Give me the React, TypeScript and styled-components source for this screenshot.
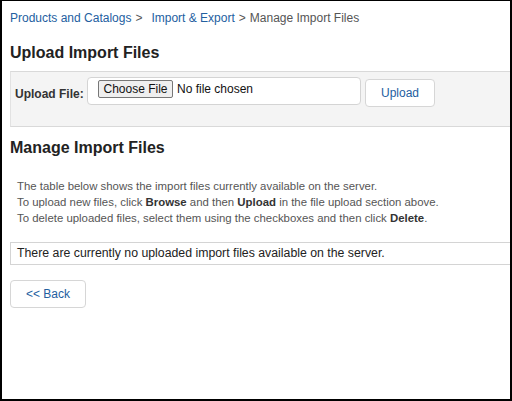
import styled, { createGlobalStyle } from 'styled-components'

const GlobalStyle = createGlobalStyle`
  html, body {
    margin: 0;
    padding: 0;
    background: #fff;
  }
  body {
    font-family: "Liberation Sans", Arial, Helvetica, sans-serif;
    color: #222;
  }
`

const Frame = styled.div`
  box-sizing: border-box;
  width: 512px;
  height: 401px;
  border-style: solid;
  border-color: #000;
  border-width: 1px 2px 2px 2px;
  overflow: hidden;
  background: #fff;
`

const Page = styled.div`
  padding: 9px 0 0 8px;
  margin-right: -40px;
`

const Breadcrumb = styled.nav`
  display: flex;
  align-items: center;
  font-size: 12px;
  line-height: 16px;
  white-space: nowrap;
`

const Crumb = styled.a`
  color: #23609f;
  text-decoration: none;
`

const CrumbCurrent = styled.span`
  color: #555;
`

const Sep = styled.span<{ $tight?: boolean }>`
  color: #555;
  margin: ${p => (p.$tight ? '0 4px' : '0 9px 0 4px')};
`

const Heading = styled.h2<{ $top: number }>`
  margin: ${p => p.$top}px 0 0 0;
  font-size: 16px;
  line-height: 20px;
  font-weight: bold;
  color: #222;
`

const UploadPanel = styled.div`
  display: flex;
  align-items: flex-start;
  margin-top: 8px;
  padding: 5px 4px 19px 4px;
  background: #f4f4f4;
  border-top: 1px solid #d9d9d9;
  border-bottom: 1px solid #d9d9d9;
  border-left: 1px solid #e2e2e2;
`

const FieldLabel = styled.label`
  align-self: center;
  margin-top: 4px;
  width: 72px;
  font-size: 12px;
  font-weight: bold;
  color: #333;
`

const FileBox = styled.div`
  box-sizing: border-box;
  display: flex;
  align-items: center;
  gap: 4px;
  width: 274px;
  height: 28px;
  padding: 0 10px 5px 10px;
  background: #fff;
  border: 1px solid #d4d4d4;
  border-radius: 4px;
`

const ChooseButton = styled.span`
  box-sizing: border-box;
  display: inline-flex;
  align-items: center;
  justify-content: center;
  width: 75px;
  height: 18px;
  background: #efefef;
  border: 1px solid #777;
  border-radius: 2px;
  font-size: 12px;
  color: #111;
`

const FileStatus = styled.span`
  font-size: 12px;
  color: #111;
`

const PlainButton = styled.button<{ $width: number }>`
  box-sizing: border-box;
  width: ${p => p.$width}px;
  height: 28px;
  padding: 0;
  background: #fff;
  border: 1px solid #d6d6d6;
  border-radius: 4px;
  font-family: inherit;
  font-size: 12px;
  color: #23609f;
  cursor: pointer;
`

const UploadButton = styled(PlainButton)`
  margin: 2px 0 0 4px;
`

const Info = styled.p`
  margin: 20px 0 0 0;
  padding-left: 7px;
  font-size: 11.4px;
  line-height: 16px;
  color: #555;

  b {
    color: #333;
  }
`

const EmptyBox = styled.div`
  margin-top: 16px;
  padding: 3px 6px;
  border: 1px solid #d4d4d4;
  border-right: none;
  font-size: 12.3px;
  line-height: 15px;
  color: #222;
`

const BackButton = styled(PlainButton)`
  display: block;
  margin-top: 15px;
`

export default function App () {
  return (
    <>
      <GlobalStyle />
      <Frame>
        <Page>
          <Breadcrumb>
            <Crumb href="#">Products and Catalogs</Crumb>
            <Sep>&gt;</Sep>
            <Crumb href="#">Import &amp; Export</Crumb>
            <Sep $tight>&gt;</Sep>
            <CrumbCurrent>Manage Import Files</CrumbCurrent>
          </Breadcrumb>

          <Heading $top={17}>Upload Import Files</Heading>
          <UploadPanel>
            <FieldLabel>Upload File:</FieldLabel>
            <FileBox>
              <ChooseButton>Choose File</ChooseButton>
              <FileStatus>No file chosen</FileStatus>
            </FileBox>
            <UploadButton $width={70}>Upload</UploadButton>
          </UploadPanel>

          <Heading $top={11}>Manage Import Files</Heading>
          <Info>
            The table below shows the import files currently available on the server.<br />
            To upload new files, click <b>Browse</b> and then <b>Upload</b> in the file upload section above.<br />
            To delete uploaded files, select them using the checkboxes and then click <b>Delete</b>.
          </Info>
          <EmptyBox>There are currently no uploaded import files available on the server.</EmptyBox>
          <BackButton $width={76}>&lt;&lt; Back</BackButton>
        </Page>
      </Frame>
    </>
  )
}
